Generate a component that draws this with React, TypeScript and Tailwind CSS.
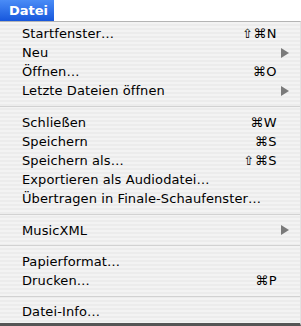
import React from 'react';

type Item =
  | { type: 'item'; label: string; shortcut?: string; submenu?: boolean }
  | { type: 'sep' };

const items: Item[] = [
  { type: 'item', label: 'Startfenster…', shortcut: '⇧⌘N' },
  { type: 'item', label: 'Neu', submenu: true },
  { type: 'item', label: 'Öffnen…', shortcut: '⌘O' },
  { type: 'item', label: 'Letzte Dateien öffnen', submenu: true },
  { type: 'sep' },
  { type: 'item', label: 'Schließen', shortcut: '⌘W' },
  { type: 'item', label: 'Speichern', shortcut: '⌘S' },
  { type: 'item', label: 'Speichern als…', shortcut: '⇧⌘S' },
  { type: 'item', label: 'Exportieren als Audiodatei…' },
  { type: 'item', label: 'Übertragen in Finale-Schaufenster…' },
  { type: 'sep' },
  { type: 'item', label: 'MusicXML', submenu: true },
  { type: 'sep' },
  { type: 'item', label: 'Papierformat…' },
  { type: 'item', label: 'Drucken…', shortcut: '⌘P' },
  { type: 'sep' },
  { type: 'item', label: 'Datei-Info…' },
];

const Arrow = () => (
  <svg width="8" height="10" viewBox="0 0 8 10" className="block">
    <path d="M0 0 L8 5 L0 10 Z" fill="#7a7a7a" />
  </svg>
);

const App: React.FC = () => {
  return (
    <div className="w-[301px] h-[326px] bg-white overflow-hidden flex flex-col font-['DejaVu_Sans',sans-serif] text-[13px] text-black">
      {/* Menu bar title */}
      <div className="h-[21px] flex shrink-0">
        <div className="w-[54px] h-full bg-gradient-to-b from-[#4a8cf6] to-[#1656dc] text-white font-bold flex items-center pl-[9px] text-[13px]">
          Datei
        </div>
      </div>

      {/* Dropdown */}
      <div className="flex-1 flex flex-col border-t border-[#b4b4b4] border-b-[3px] border-b-[#555] border-r border-r-[#e2e2e2] pt-[2px] bg-[repeating-linear-gradient(to_bottom,#f3f3f3_0px,#f3f3f3_2px,#ececec_2px,#ececec_4px)]">
        {items.map((it, i) =>
          it.type === 'sep' ? (
            <div key={i} className="h-[12px] flex items-center">
              <div className="w-full h-px bg-[#d2d2d2]" />
            </div>
          ) : (
            <div key={i} className="h-[19.2px] flex items-center pl-[22px] pr-[10px]">
              <span className="flex-1 whitespace-nowrap tracking-[0.1px]">{it.label}</span>
              {it.shortcut && <span className="pr-[13px] tracking-[0.5px]">{it.shortcut}</span>}
              {it.submenu && (
                <span className="pr-[1px]">
                  <Arrow />
                </span>
              )}
            </div>
          )
        )}
      </div>
    </div>
  );
};

export default App;
